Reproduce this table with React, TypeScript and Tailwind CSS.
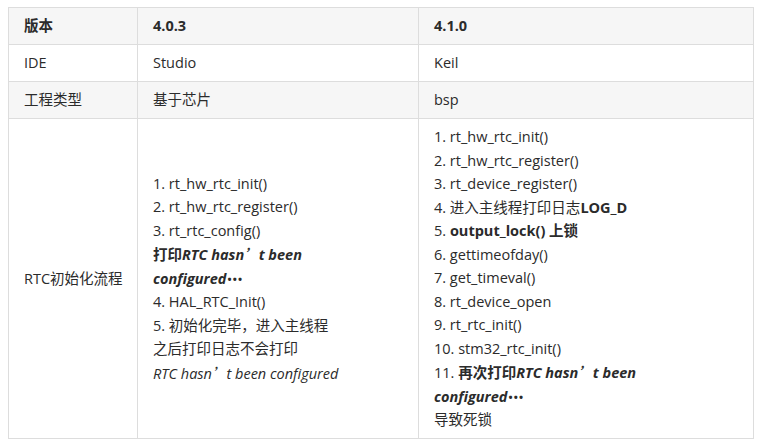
const FONT = '"Open Sans", "Noto Sans CJK SC", sans-serif';

const cell = 'border border-[#dddddd] px-[15px] py-[6.25px] align-middle whitespace-nowrap';

// full-width quote as rendered by the CJK font, and the centred dots after "configured"
const Q = () => <span className="font-['Noto_Sans_CJK_SC']">’</span>;
const Dots = () => <span className="text-[11px] tracking-[1px] pl-[1px] align-[1px]">•••</span>;

const LEFT_FLOW = [
  <>1. rt_hw_rtc_init()</>,
  <>2. rt_hw_rtc_register()</>,
  <>3. rt_rtc_config()</>,
  <b>打印<i>RTC hasn<Q />t been</i></b>,
  <b><i>configured<Dots /></i></b>,
  <>4. HAL_RTC_Init()</>,
  <>5. 初始化完毕，进入主线程</>,
  <>之后打印日志不会打印</>,
  <i>RTC hasn<Q />t been configured</i>,
];

const RIGHT_FLOW = [
  <>1. rt_hw_rtc_init()</>,
  <>2. rt_hw_rtc_register()</>,
  <>3. rt_device_register()</>,
  <>4. 进入主线程打印日志<b>LOG_D</b></>,
  <>5. <b>output_lock() 上锁</b></>,
  <>6. gettimeofday()</>,
  <>7. get_timeval()</>,
  <>8. rt_device_open</>,
  <>9. rt_rtc_init()</>,
  <>10. stm32_rtc_init()</>,
  <>11. <b>再次打印<i>RTC hasn<Q />t been</i></b></>,
  <b><i>configured<Dots /></i></b>,
  <>导致死锁</>,
];

function Lines({ items }: { items: React.ReactNode[] }) {
  return (
    <div>
      {items.map((it, i) => (
        <div key={i}>{it}</div>
      ))}
    </div>
  );
}

export default function App() {
  return (
    <div className="w-[760px] h-[447px] bg-white pl-[8px] pt-[7px]" style={{ fontFamily: FONT }}>
      <table className="border-collapse w-[745px] text-[14.5px] leading-[23.5px] text-[#2b2b2b] table-fixed">
        <colgroup>
          <col className="w-[129px]" />
          <col className="w-[281px]" />
          <col className="w-[335px]" />
        </colgroup>
        <tbody>
          <tr className="bg-[#f6f6f6] font-bold">
            <td className={cell}>版本</td>
            <td className={cell}>4.0.3</td>
            <td className={cell}>4.1.0</td>
          </tr>
          <tr className="bg-white">
            <td className={cell}>IDE</td>
            <td className={cell}>Studio</td>
            <td className={cell}>Keil</td>
          </tr>
          <tr className="bg-[#f6f6f6]">
            <td className={cell}>工程类型</td>
            <td className={cell}>基于芯片</td>
            <td className={cell}>bsp</td>
          </tr>
          <tr className="bg-white">
            <td className={cell}>RTC初始化流程</td>
            <td className={cell}>
              <Lines items={LEFT_FLOW} />
            </td>
            <td className={cell}>
              <Lines items={RIGHT_FLOW} />
            </td>
          </tr>
        </tbody>
      </table>
    </div>
  );
}
